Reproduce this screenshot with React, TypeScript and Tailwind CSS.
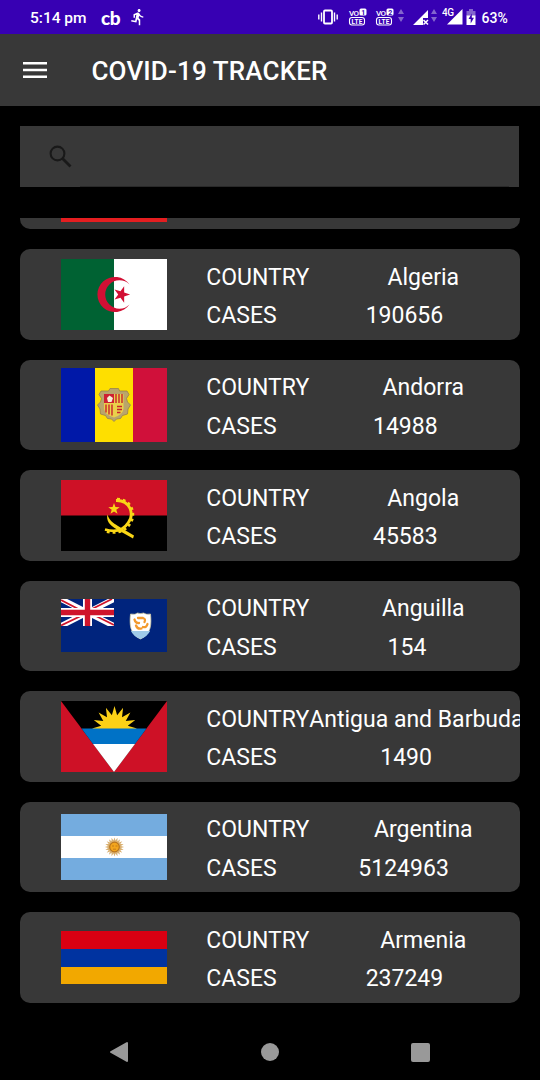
import React from "react";

const star = (cx: number, cy: number, outer: number, inner: number, points: number, start: number) =>
  Array.from({ length: points * 2 }, (_, i) => {
    const r = i % 2 === 0 ? outer : inner;
    const a = ((start + (i * 180) / points) * Math.PI) / 180;
    return `${(cx + r * Math.cos(a)).toFixed(2)},${(cy + r * Math.sin(a)).toFixed(2)}`;
  }).join(" ");

const Algeria = () => (
  <svg className="shrink-0" width="106" height="71" viewBox="0 0 106 71">
    <path fill="#fff" d="M0 0h106v71H0z" />
    <path fill="#006233" d="M0 0h53v71H0z" />
    <path fill="#d21034" d="M68.5 25.5A17.6 17.6 0 1 0 68.5 45.5A14.2 14.2 0 1 1 68.5 25.5z" />
    <polygon fill="#d21034" points={star(60.5, 35.5, 8.6, 3.3, 5, 0)} />
  </svg>
);

const Andorra = () => (
  <svg className="shrink-0" width="106" height="74" viewBox="0 0 106 74">
    <path fill="#0018a8" d="M0 0h35v74H0z" />
    <path fill="#fedf00" d="M34 0h38v74H34z" />
    <path fill="#d0103a" d="M72 0h34v74H72z" />
    <path
      fill="#b9a56c"
      stroke="#96824f"
      strokeWidth=".8"
      strokeLinejoin="round"
      d="M49 20.500h8.500l1 2.500h7.500l2 3.500-2.500 4 1 3.500 3 3-2.500 4-.5 5-5 1.500-2 3-4 .5-2.500 2.500-2.500-2.500-4-.5-2-3-5-1.500-.5-5-2.500-4 3-3 1-3.500-2.500-4 2-3.500h7.500z"
    />
    <path fill="#ead04b" d="M43 26h19.500v15q-1 6-9.500 8.500-9-2.500-10-8.500z" />
    <path fill="#cf2032" d="M43 26h10v9H43z" />
    <path fill="#f5efd5" d="M46 30l2.500-2.500L52 30l-1.500 4H47z" />
    <path
      stroke="#c8232c"
      strokeWidth="1.400"
      fill="none"
      d="M45 36.500v8M48 36.500v10M51 36.500v11M55 26v9M58 26v9M61 26v9M56 38.500h5M56 41.500h5M56 44.500h3.500"
    />
  </svg>
);

const Angola = () => (
  <svg className="shrink-0" width="106" height="71" viewBox="0 0 106 71">
    <path fill="#000" d="M0 0h106v71H0z" />
    <path fill="#ce1126" d="M0 0h106v35.500H0z" />
    <polygon fill="#f9d616" points={star(53, 29, 6, 2.4, 5, -90)} />
    <path fill="none" stroke="#f9d616" strokeWidth="2.800" d="M55 20.500C69 20 74 34 67 43C62 51 53 52 44 49.500" />
    <path
      fill="none"
      stroke="#f9d616"
      strokeWidth="2.600"
      strokeDasharray="2.800 3"
      d="M56 19C71 19 76 35 68.500 44.500C63 53 52 54 43.500 51"
    />
    <path fill="#f9d616" d="M46.500 34.500C48 40 52 43 57 46L73 55.500L72 58.500L56 49.500C48 45 45 40 46.500 34.500z" />
  </svg>
);

const Anguilla = () => (
  <svg className="mb-px shrink-0" width="106" height="53" viewBox="0 0 106 53">
    <path fill="#00247d" d="M0 0h106v53H0z" />
    <svg width="53" height="27" viewBox="0 0 53 27">
      <path stroke="#fff" strokeWidth="5.600" d="M0 0l53 27M53 0L0 27" />
      <path stroke="#cf142b" strokeWidth="1.800" d="M0 1l24 12.500M51 0L28 11.500M53 26L29 14M0 26.500l25-12" />
      <path stroke="#fff" strokeWidth="9" d="M26.500 0v27M0 13.500h53" />
      <path stroke="#cf142b" strokeWidth="5.400" d="M26.500 0v27M0 13.500h53" />
    </svg>
    <path fill="#fff" stroke="#d9cf9d" strokeWidth=".7" d="M69.500 15q5 1 7-1 3 1.200 6 0 3 2 7 1c1 10 1 20-10 25-11-5-11-15-10-25z" />
    <path fill="#9fcbe9" d="M70 32h19q-2 5-9.500 8Q72 37 70 32z" />
    <g fill="none" stroke="#f39a2d" strokeWidth="2.300" strokeLinecap="round">
      <path d="M73.500 20.500q1 4 4.500 3.500M77 19h5q3 1 1.500 4M86.500 25q-1 4-4.500 3M80.500 29.500q-4 1-5.500-3" />
    </g>
  </svg>
);

const Antigua = () => (
  <svg className="shrink-0" width="106" height="71" viewBox="0 0 106 71">
    <path fill="#ce1126" d="M0 0h106v71H0z" />
    <path fill="#000" d="M0 0h106L53 71z" />
    <svg width="106" height="28" viewBox="0 0 106 28">
      <polygon fill="#fcd116" points={star(53.5, 27.500, 22.500, 13.500, 16, -90)} />
    </svg>
    <path fill="#0072c6" d="M20.500 27.500h65L74 43H32z" />
    <path fill="#fff" d="M32 43h42L53 71z" />
  </svg>
);

const Argentina = () => (
  <svg className="shrink-0" width="106" height="66" viewBox="0 0 106 66">
    <path fill="#74acdf" d="M0 0h106v66H0z" />
    <path fill="#fff" d="M0 22h106v22H0z" />
    <polygon fill="#d9b071" points={star(53.500, 33, 9.600, 6.500, 20, -90)} />
    <circle cx="53.500" cy="33" r="4.800" fill="#f3a51d" stroke="#b9751d" strokeWidth="1.200" />
    <path stroke="#b06b15" strokeWidth=".7" fill="none" d="M51 32h2M54.500 32h2M52 35.200h3" />
  </svg>
);

const Armenia = () => (
  <svg className="shrink-0" width="106" height="53" viewBox="0 0 106 53">
    <path fill="#f2a800" d="M0 0h106v53H0z" />
    <path fill="#0033a0" d="M0 0h106v36H0z" />
    <path fill="#d90012" d="M0 0h106v18H0z" />
  </svg>
);

const countries = [
  { name: "Algeria", cases: "190656", Flag: Algeria },
  { name: "Andorra", cases: "14988", Flag: Andorra },
  { name: "Angola", cases: "45583", Flag: Angola },
  { name: "Anguilla", cases: "154", Flag: Anguilla },
  { name: "Antigua and Barbuda", cases: "1490", Flag: Antigua },
  { name: "Argentina", cases: "5124963", Flag: Argentina },
  { name: "Armenia", cases: "237249", Flag: Armenia },
];

const VoLte = ({ sim }: { sim: string }) => (
  <svg width="20" height="20" viewBox="0 0 20 20" fontFamily="Roboto, sans-serif" fontWeight="700">
    <text x="1" y="8.500" fontSize="8" fontWeight="500" fill="#fff" textLength="10">VO</text>
    <rect x="11.500" y="1.500" width="7" height="7" rx="1.500" fill="#fff" />
    <text x="13.200" y="7.700" fontSize="7" fill="#3700b3">{sim}</text>
    <rect x="1.500" y="10.500" width="15" height="7.500" rx="2.500" fill="none" stroke="#fff" strokeWidth="1.100" />
    <text x="3.500" y="16.800" fontSize="6.500" fill="#fff" textLength="11">LTE</text>
  </svg>
);

const DataArrows = () => (
  <svg width="6" height="16" viewBox="0 0 6 16" fill="#8465ce">
    <path d="M0 6l3-5 3 5zM0 9h6l-3 5z" />
  </svg>
);

const StatusBar = () => (
  <header className="flex h-[34px] shrink-0 items-center bg-[#3700b3] pl-[30px] text-white">
    <span className="w-[71px] pt-px text-[15.5px] leading-[34px] font-medium">5:14 pm</span>
    <span className="w-[28px] pt-px font-['Lato',sans-serif] text-[19px] leading-[32px] font-black tracking-[-0.5px]">cb</span>
    <svg width="18" height="18" viewBox="0 0 24 24" fill="#fff">
      <path d="M13.490 5.480c1.100 0 2-.9 2-2s-.9-2-2-2-2 .9-2 2 .9 2 2 2zm-3.600 13.900l1-4.400 2.100 2v6h2v-7.500l-2.100-2 .6-3c1.300 1.500 3.300 2.500 5.500 2.500v-2c-1.900 0-3.500-1-4.300-2.400l-1-1.600c-.4-.6-1-1-1.700-1-.3 0-.5.100-.8.100l-5.200 2.200v4.700h2v-3.400l1.800-.7-1.600 8.100-4.900-1-.4 2 7 1.400z" />
    </svg>
    <div className="ml-[171px] flex items-center">
      <svg width="20" height="16" viewBox="0 0 20 16" fill="none" stroke="#fff">
        <rect x="6" y="1.500" width="8" height="13" rx="1" strokeWidth="1.800" />
        <path strokeWidth="1.400" d="M3.500 3.500v9M.8 5.500v5M16.500 3.500v9M19.200 5.500v5" />
      </svg>
      <div className="ml-[9.5px] flex gap-[7px]">
        <VoLte sim="1" />
        <VoLte sim="2" />
      </div>
      <div className="ml-[3.5px] flex pb-[2px]"><DataArrows /></div>
      <svg className="ml-[9px]" width="17" height="17" viewBox="0 0 17 17">
        <path fill="#fff" d="M0 16L15 1v8h-5v7z" />
        <path stroke="#fff" strokeWidth="1.500" d="M10.500 11l4.500 4.500M15 11l-4.500 4.500" />
      </svg>
      <div className="ml-[1px] flex pb-[2px]"><DataArrows /></div>
      <svg className="ml-[4.5px]" width="22" height="20" viewBox="0 0 22 20">
        <path fill="#fff" d="M5 17.500L20.500 2v15.500z" />
        <text x="0" y="9" fontSize="10" fontWeight="500" fontFamily="Roboto, sans-serif" fill="#fff" stroke="#3700b3" strokeWidth="1" paintOrder="stroke" textLength="12">4G</text>
      </svg>
      <svg className="ml-[2px]" width="10" height="18" viewBox="0 0 10 18">
        <path fill="#8465ce" d="M3 1h4v2h2.500v5H.5V3H3z" />
        <path fill="#fff" d="M.5 7.500h9V17h-9z" />
        <path fill="#3700b3" d="M5.800 5.500L2.500 11h2.200v4.500L8 9.800H5.800z" />
      </svg>
      <span className="ml-[6px] pt-px text-[14px] leading-[34px] font-medium">63%</span>
    </div>
  </header>
);

export default function App() {
  return (
    <div className="flex h-[1080px] w-[540px] flex-col overflow-hidden bg-black font-['Roboto',sans-serif] text-white">
      <StatusBar />
      <div className="flex h-[72px] shrink-0 items-center bg-[#383838] pl-[23px]">
        <svg width="24" height="18" viewBox="0 0 24 18" fill="#fff">
          <path d="M0 1h24v2.400H0zM0 7.800h24v2.400H0zM0 14.600h24V17H0z" />
        </svg>
        <h1 className="ml-[44.5px] pt-[3px] text-[26px] leading-[69px] font-medium tracking-[0.15px] whitespace-nowrap">COVID-19 TRACKER</h1>
      </div>
      <div className="mx-5 mt-5 flex h-[61px] w-[499px] shrink-0 flex-col justify-between bg-[#383838]">
        <svg className="mt-[19px] ml-[29px]" width="23" height="23" viewBox="0 0 23 23" fill="none" stroke="#191919">
          <circle cx="8.500" cy="8.500" r="6.900" strokeWidth="2.100" />
          <path strokeWidth="2.800" d="M13.500 13.500l8 8" />
        </svg>
        <div className="mr-[10px] ml-[60px] h-px bg-[#292929]" />
      </div>
      <main className="mx-5 mt-[31px] flex flex-col">
        <div className="h-[11px] shrink-0 rounded-b-[10px] bg-[#383838] pl-[41px]">
          <div className="h-[4px] w-[106px] bg-[#e41e20]" />
        </div>
        <div className="mt-[20.3px] flex flex-col gap-5">
          {countries.map(({ name, cases, Flag }) => (
            <article key={name} className="flex h-[90.5px] shrink-0 items-center overflow-hidden rounded-[10px] bg-[#383838] pl-[41px]">
              <Flag />
              <div className="ml-[39.3px] flex h-full w-[331px] shrink-0 flex-col pt-[9.6px] text-[23px] leading-[38.5px] whitespace-nowrap">
                <div className="flex">
                  <span>COUNTRY</span>
                  <span className={name.length > 14 ? "grow text-left" : "grow text-center"}>{name}</span>
                </div>
                <div className="flex" style={{ paddingRight: (cases.length - 3) * 1.7 }}>
                  <span>CASES</span>
                  <span className="grow text-center">{cases}</span>
                </div>
              </div>
            </article>
          ))}
        </div>
      </main>
      <nav className="mt-auto flex h-[56px] shrink-0 items-center pl-[109px]">
        <svg width="20" height="22" viewBox="0 0 20 22">
          <path d="M2 11L18 2v18z" fill="#999" stroke="#999" strokeWidth="2" strokeLinejoin="round" />
        </svg>
        <div className="ml-[132px] h-[18px] w-[18px] rounded-full bg-[#999]" />
        <div className="ml-[132px] h-[19px] w-[19px] rounded-[2px] bg-[#999]" />
      </nav>
    </div>
  );
}
